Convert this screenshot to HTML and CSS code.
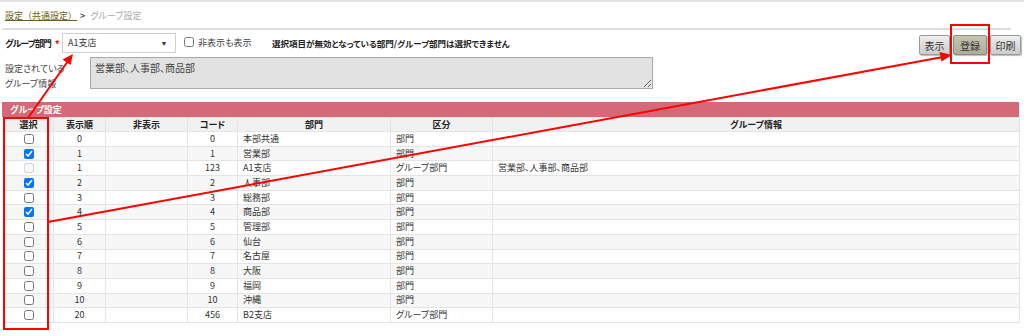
FILE: index.html
```html
<!DOCTYPE html>
<html lang="ja">

<head>
    <meta charset="UTF-8">
    <title>グループ設定</title>
    <link rel="stylesheet" href="styles.css">
</head>

<body>
    <div class="page">
        <div class="breadcrumb">
            <a href="#">設定（共通設定）</a><span class="gt">&gt;</span><span class="here">グループ設定</span>
        </div>

        <div class="form_row">
            <label class="lbl"><span class="lbl_txt">グループ部門</span><span class="req">*</span></label>
            <div class="select">A1支店<span class="caret">▾</span></div>
            <label class="chk"><input type="checkbox">非表示も表示</label>
            <p class="notice">選択項目が無効となっている部門/グループ部門は選択できません</p>
            <div class="btns">
                <button class="btn">表示</button>
                <button class="btn btn_main">登録</button>
                <button class="btn">印刷</button>
            </div>
        </div>

        <div class="info_row">
            <div class="info_lbl">設定されている<br>グループ情報</div>
            <textarea class="info" readonly>営業部、人事部、商品部</textarea>
        </div>

        <div class="bar">グループ設定</div>
        <table class="grid">
            <thead>
                <tr>
                    <th class="c_sel">選択</th>
                    <th class="c_ord">表示順</th>
                    <th class="c_hide">非表示</th>
                    <th class="c_code">コード</th>
                    <th class="c_dept">部門</th>
                    <th class="c_kind">区分</th>
                    <th>グループ情報</th>
                </tr>
            </thead>
            <tbody>
                <tr><td class="c_sel"><input type="checkbox"></td><td class="num">0</td><td></td><td class="num">0</td><td>本部共通</td><td>部門</td><td></td></tr>
                <tr><td class="c_sel"><input type="checkbox" checked></td><td class="num">1</td><td></td><td class="num">1</td><td>営業部</td><td>部門</td><td></td></tr>
                <tr><td class="c_sel"><input type="checkbox" disabled></td><td class="num">1</td><td></td><td class="num">123</td><td>A1支店</td><td>グループ部門</td><td>営業部、人事部、商品部</td></tr>
                <tr><td class="c_sel"><input type="checkbox" checked></td><td class="num">2</td><td></td><td class="num">2</td><td>人事部</td><td>部門</td><td></td></tr>
                <tr><td class="c_sel"><input type="checkbox"></td><td class="num">3</td><td></td><td class="num">3</td><td>総務部</td><td>部門</td><td></td></tr>
                <tr><td class="c_sel"><input type="checkbox" checked></td><td class="num">4</td><td></td><td class="num">4</td><td>商品部</td><td>部門</td><td></td></tr>
                <tr><td class="c_sel"><input type="checkbox"></td><td class="num">5</td><td></td><td class="num">5</td><td>管理部</td><td>部門</td><td></td></tr>
                <tr><td class="c_sel"><input type="checkbox"></td><td class="num">6</td><td></td><td class="num">6</td><td>仙台</td><td>部門</td><td></td></tr>
                <tr><td class="c_sel"><input type="checkbox"></td><td class="num">7</td><td></td><td class="num">7</td><td>名古屋</td><td>部門</td><td></td></tr>
                <tr><td class="c_sel"><input type="checkbox"></td><td class="num">8</td><td></td><td class="num">8</td><td>大阪</td><td>部門</td><td></td></tr>
                <tr><td class="c_sel"><input type="checkbox"></td><td class="num">9</td><td></td><td class="num">9</td><td>福岡</td><td>部門</td><td></td></tr>
                <tr><td class="c_sel"><input type="checkbox"></td><td class="num">10</td><td></td><td class="num">10</td><td>沖縄</td><td>部門</td><td></td></tr>
                <tr><td class="c_sel"><input type="checkbox"></td><td class="num">20</td><td></td><td class="num">456</td><td>B2支店</td><td>グループ部門</td><td></td></tr>
            </tbody>
        </table>

        <!-- 注釈（赤枠・矢印） -->
        <svg class="marks" width="1024" height="336" viewBox="0 0 1024 336">
            <g fill="none" stroke="#f00" stroke-width="2">
                <rect x="4" y="118" width="44" height="211"/>
                <rect x="951" y="25" width="38" height="38"/>
                <line x1="28" y1="118" x2="68" y2="61"/>
                <line x1="48" y1="222" x2="943" y2="57"/>
            </g>
            <g fill="#f00">
                <polygon points="73,54 70.5,65 62.5,59.5"/>
                <polygon points="952,55 941.5,61.5 939.5,52"/>
            </g>
        </svg>
    </div>
</body>

</html>
```

FILE: styles.css
```css
* {
    margin: 0;
    padding: 0;
    box-sizing: border-box;
}

body {
    font-family: "Noto Sans CJK JP", "Noto Sans", sans-serif;
    font-size: 9px;
    font-feature-settings: "palt";
    color: #333;
    background: #fff;
}

.page {
    position: relative;
    width: 1024px;
    height: 336px;
    padding: 0 3px 0 2px;
    border-top: 2px solid #e2e2e2;
    overflow: hidden;
}

/* パンくず */
.breadcrumb {
    height: 28px;
    padding: 7px 0 0 3px;
    line-height: 14px;
    border-bottom: 2px solid #dedede;
    margin-right: 10px;
    font-feature-settings: normal;
}

.breadcrumb a {
    color: #6b5d22;
    text-decoration: underline;
}

.breadcrumb .gt {
    color: #555;
    margin: 0 5px 0 3px;
    font-weight: bold;
}

.breadcrumb .here {
    color: #aaa;
    font-feature-settings: "palt";
}

/* 検索行 */
.form_row {
    display: flex;
    align-items: flex-start;
    height: 27px;
    padding: 3px 0 0 3px;
}

.lbl {
    display: flex;
    align-items: center;
    gap: 4px;
    width: 57px;
    height: 20px;
    font-size: 9px;
    font-weight: bold;
    color: #222;
    white-space: nowrap;
    overflow: hidden;
}

.lbl_txt {
    letter-spacing: -1px;
}

.req {
    color: #e02020;
    font-size: 10px;
}

.select {
    position: relative;
    width: 114px;
    height: 20px;
    border: 1px solid #cfcfcf;
    background: #fff;
    padding-left: 5px;
    line-height: 18px;
    color: #333;
}

.caret {
    position: absolute;
    right: 9px;
    top: 0;
    font-size: 8px;
    color: #333;
}

.chk {
    display: flex;
    align-items: center;
    width: 89px;
    height: 18px;
    margin-left: 7px;
    color: #444;
}

.chk input {
    width: 10px;
    height: 10px;
    margin: 0 4px 0 1px;
}

.notice {
    font-size: 8.5px;
    font-weight: bold;
    color: #222;
    line-height: 20px;
}

.btns {
    display: flex;
    gap: 3px;
    margin-left: auto;
    padding-top: 2px;
}

.btn {
    height: 20px;
    width: 31px;
    font-family: inherit;
    font-size: 10px;
    font-feature-settings: "palt";
    color: #333;
    border: 1px solid #9a9a9a;
    border-radius: 2px;
    background: linear-gradient(#eeeeee, #cdcdcd);
    box-shadow: 1px 1px 1px #bbb;
}

.btn_main {
    width: 34px;
    background: linear-gradient(#c7c5b2, #aeac98);
    border-color: #8e8c7a;
}

/* グループ情報 */
.info_row {
    display: flex;
    height: 45px;
    padding-left: 3px;
}

.info_lbl {
    width: 85px;
    padding-top: 4px;
    line-height: 15px;
    color: #444;
}

.info {
    width: 563px;
    height: 32px;
    background: #e2e2e2;
    border: 1px solid #a9a9a9;
    padding: 2px 4px;
    font-family: inherit;
    font-size: 10px;
    font-feature-settings: "palt";
    color: #444;
    resize: both;
}

/* 一覧 */
.bar {
    height: 15px;
    margin: 0 2px 0 0;
    padding-left: 8px;
    line-height: 15px;
    background: #d46a78;
    color: #fff;
    font-size: 9px;
    font-weight: bold;
}

.grid {
    width: 1017px;
    margin-left: 1px;
    border-collapse: collapse;
    table-layout: fixed;
}

.grid th,
.grid td {
    height: 14.7px;
    padding: 0 5px;
    border: 1px solid #e4e4e4;
    line-height: 12px;
    white-space: nowrap;
}

.grid th {
    height: 14px;
    background: #f1f1f1;
    color: #222;
    font-weight: bold;
    text-align: center;
}

.grid tbody tr:nth-child(even) td {
    background: #f7f7f7;
}

.grid .num,
.grid .c_sel {
    text-align: center;
}

.grid td input {
    display: block;
    width: 10px;
    height: 10px;
    margin: 0 auto;
}

.c_sel { width: 50px; }
.c_ord { width: 52px; }
.c_hide { width: 82px; }
.c_code { width: 50px; }
.c_dept { width: 153px; }
.c_kind { width: 102px; }

.marks {
    position: absolute;
    left: 0;
    top: -2px;
    pointer-events: none;
}
```
